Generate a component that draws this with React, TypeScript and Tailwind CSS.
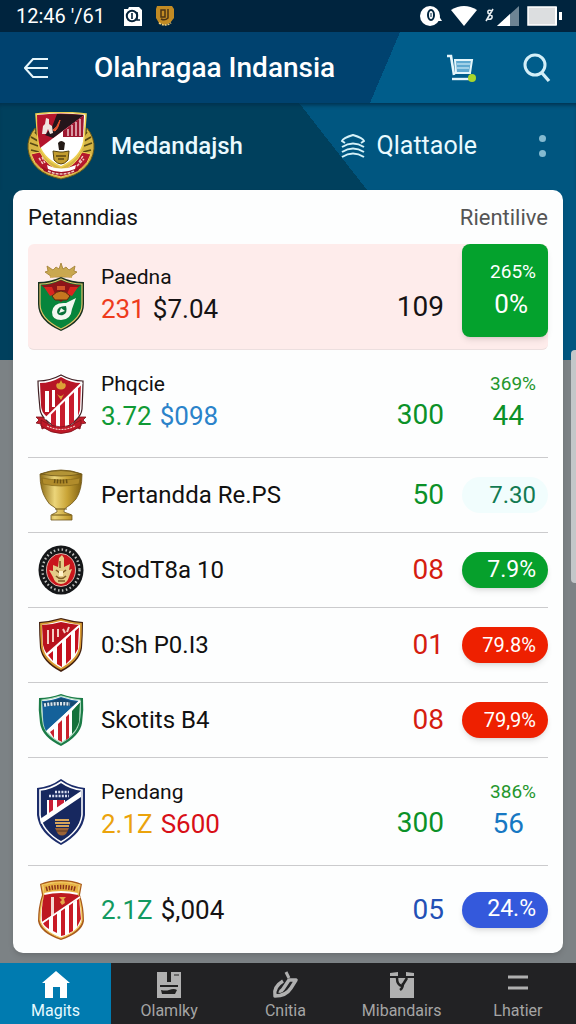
import type { ReactNode } from "react";

type Team = {
  id: string;
  crest: ReactNode;
  name?: string;
  first?: string;
  firstColor?: string;
  second?: string;
  secondColor?: string;
  score: string;
  scoreColor: string;
  top?: string;
  rate: string;
  rateClass: string;
  kind: "featured" | "tall" | "short" | "last";
};

function CrestGreen() {
  return (
    <svg viewBox="0 0 48 70" className="h-[70px] w-12" aria-hidden="true">
      <path d="M10 4l6 4 3-3 3 2 2-6 2 6 3-2 3 3 6-4-1 5 3 1-7 5H15L8 10l3-1z" fill="#c9a850" stroke="#a07d31" strokeWidth=".8" />
      <path d="M13 15q11-3 22 0" fill="none" stroke="#cda84f" strokeWidth="2" />
      <path d="M24 15q11 5 23 5v22q0 17-23 27Q1 59 1 42V20q12 0 23-5z" fill="#17311f" />
      <path d="M24 17q10 5 21 5v20q0 15-21 25Q3 57 3 42V22q11 0 21-5z" fill="#07853c" stroke="#e2c469" strokeWidth="1.2" />
      <path d="M24 18q10 5 20 5L24 40 4 23q10 0 20-5z" fill="#8e1519" />
      <path d="M7 25l8 0 3 7-5 2zM41 25l-8 0-3 7 5 2z" fill="#d9251f" />
      <path d="M15 34q9-10 18 0l-3 4H18z" fill="#c5761f" stroke="#5b2410" strokeWidth="1" />
      <path d="M20 24h8v4h-8z" fill="#d3542a" />
      <path d="M39 36L29 41q-13-1-14 9 0 8 9 8 10 0 11-11z" fill="#f3f7f1" />
      <path d="M29 44q-9 0-9 6 1 4 6 3 5-2 3-9z" fill="#08713a" />
      <path d="M24 46l4 3-6 2z" fill="#f3f7f1" />
    </svg>
  );
}

function CrestRibbon() {
  return (
    <svg viewBox="0 0 52 62" className="h-[62px] w-[52px]" aria-hidden="true">
      <path d="M1 44l10 0 3 9-7 3-1-5-5-1 3-3zM51 44l-10 0-3 9 7 3 1-5 5-1-3-3z" fill="#c21f2b" stroke="#7d1019" strokeWidth=".8" />
      <path d="M26 2q11 6 22 6 0 7-1 28-1 11-21 21Q6 47 5 36 3 15 3 8q12 0 23-6z" fill="#fff" stroke="#402024" strokeWidth="1.2" />
      <path d="M26 4q10 6 20 6L12 44q-6-5-6-12L5 10q11 0 21-6z" fill="#b71525" />
      <path d="M10 18h4v21h-4zM17 17h3v17h-3z" fill="#fff" />
      <path d="M16 40l5-6v20l-5-3zM25 30l5-6v32h-5zM34 21l5-6v34l-5 3zM43 12l3-2-1 27-2 6z" fill="#c81d2d" />
      <path d="M47 10L10 46" stroke="#fff" strokeWidth="2" />
      <path d="M22 15q-2-4 1-5 1 2 3-3 2 5 3 3 3 1 1 5-4 3-8 0zM22 21q4 4 7 0l-3 6z" fill="#dca136" />
      <path d="M6 47q20 14 40 0v6q-20 15-40 0z" fill="#bd1927" stroke="#7d1019" strokeWidth=".8" />
      <path d="M12 53q14 7 28 0" fill="none" stroke="#f1c6bf" strokeWidth="1.2" strokeDasharray="2 1" />
    </svg>
  );
}

function CrestCup() {
  return (
    <svg viewBox="0 0 44 52" className="h-[52px] w-11" aria-hidden="true">
      <defs>
        <linearGradient id="gold">
          <stop offset="0" stopColor="#8c6b14" />
          <stop offset=".35" stopColor="#ecd57a" />
          <stop offset=".65" stopColor="#c9a437" />
          <stop offset="1" stopColor="#806010" />
        </linearGradient>
      </defs>
      <path d="M1 5q21-8 42 0 0 16-6 25-5 6-9 8-4 2-3 5l8 3v5H12v-5l6-3q1-3-3-5-5-2-8-8Q1 21 1 5z" fill="url(#gold)" stroke="#70571a" strokeWidth=".8" />
      <path d="M2 5q20-7 40 0-20 4-40 0z" fill="#b39436" stroke="#6d5518" strokeWidth=".8" />
      <path d="M3 9q19 4 38 0l-1 6q-18 4-36 0z" fill="#b18c2b" stroke="#846719" strokeWidth=".7" />
      <path d="M15 12q7 1 15 0" stroke="#6c5213" strokeWidth="4" strokeDasharray="1.500 1.500" fill="none" />
      <path d="M16 40h12M13 46h19" stroke="#6c5213" strokeWidth="1" />
    </svg>
  );
}

function CrestRound() {
  return (
    <svg viewBox="0 0 46 50" className="h-[50px] w-[46px]" aria-hidden="true">
      <ellipse cx="23" cy="25" rx="22.5" ry="24.5" fill="#151719" />
      <ellipse cx="23" cy="25" rx="18.5" ry="20.5" fill="none" stroke="#bfc0bd" strokeWidth="2.4" strokeDasharray="1.5 2.5" />
      <ellipse cx="23" cy="25" rx="14.5" ry="16.5" fill="#c9161c" stroke="#e9d9cf" strokeWidth=".8" />
      <path d="M15 20l5 2 1-9 3-3 2 3 0 9 6-3-1 6 3-1-3 8q-2 7-8 7t-8-7l-4-7 4 1z" fill="#e4cd88" />
      <path d="M18 25q5 5 10 0M18 31q5 5 10 0M22 16v7M20 36h7" stroke="#7d5c25" strokeWidth="1.6" fill="none" />
      <path d="M21 26h4v5h-4z" fill="#fff3ca" />
    </svg>
  );
}

function CrestGoldRed() {
  return (
    <svg viewBox="0 0 46 56" className="h-14 w-[46px]" aria-hidden="true">
      <path d="M23 1q11 3 22 4 0 12-1 26-2 14-21 24Q4 45 2 31 1 17 1 5q12-1 22-4z" fill="#44210f" />
      <path d="M23 3q10 3 20 4 0 12-1 23-2 13-19 22Q6 43 4 30 3 18 3 7q10-1 20-4z" fill="#fff" stroke="#d89a31" strokeWidth="1.8" />
      <path d="M23 5q9 2 18 3L9 37q-3-4-4-9L4 8q9 0 19-3z" fill="#b8121d" />
      <path d="M10 38l5-4v10zM19 30l5-5v25l-5-3zM28 22l5-5v25l-5 5zM37 14l4-4-1 22-3 5z" fill="#c5101e" />
      <path d="M10 13v14M15 12v13M20 12v8M25 12l2 4M31 10l-2 5" stroke="#f4cfc4" strokeWidth="2" fill="none" />
      <path d="M41 9L8 38" stroke="#fff" strokeWidth="1.8" />
    </svg>
  );
}

function CrestBlueGreen() {
  return (
    <svg viewBox="0 0 46 54" className="h-[54px] w-[46px]" aria-hidden="true">
      <path d="M23 1q11 4 22 4 1 12-1 25-2 13-21 23Q4 44 2 30 0 17 1 5q11 0 22-4z" fill="#1b7c47" />
      <path d="M23 3q10 3 19 4 1 12-1 22-2 12-18 21Q6 41 5 29 3 17 4 7q9-1 19-4z" fill="#fff" stroke="#b3dec4" strokeWidth="1.2" />
      <path d="M23 4q9 3 18 4L8 38Q5 32 5 24L4 8q9 0 19-4z" fill="#14619a" />
      <path d="M5 9q9 0 18-4 8 3 17 4l-5 4H5z" fill="#164a73" />
      <path d="M6 12q14-2 26-1" stroke="#dbe5eb" strokeWidth="3.5" strokeDasharray="2 1.2" fill="none" />
      <path d="M12 39l4-3v9zM20 31l4-4v22l-4-2zM28 24l3-3v24l-3 2z" fill="#c8202c" />
      <path d="M34 18l8-9-1 20q-2 7-7 12z" fill="#14713b" />
      <path d="M42 8L9 39" stroke="#fff" strokeWidth="2" />
    </svg>
  );
}

function CrestNavy() {
  return (
    <svg viewBox="0 0 50 68" className="h-[68px] w-[50px]" aria-hidden="true">
      <path d="M25 1q11 8 24 9v27q-2 18-24 30Q3 55 1 37V10Q14 9 25 1z" fill="#1c2d6b" />
      <path d="M25 4q10 7 21 8v25q-2 16-21 27Q6 53 4 37V12q11-1 21-8z" fill="#17285f" stroke="#fff" strokeWidth="1.6" />
      <path d="M11 22h18v5L11 40z" fill="#fff" />
      <path d="M13 22h4v15l-4 3zM21 22h7v6l-7 5z" fill="#c91c35" />
      <path d="M45 13v6L5 46l-1-5z" fill="#fff" />
      <path d="M19 14h14M13 18h20" stroke="#d8def0" strokeWidth="2.6" strokeDasharray="2 1.2" fill="none" />
      <path d="M19 42h14M19 45h15M20 48h13" stroke="#d7a55b" strokeWidth="1.8" />
      <path d="M19 50h14l-3 6q-4 3-8 0z" fill="#9b6336" />
      <path d="M20 53h12" stroke="#57351e" strokeWidth="1" />
    </svg>
  );
}

function CrestBanner() {
  return (
    <svg viewBox="0 0 48 62" className="h-[62px] w-12" aria-hidden="true">
      <path d="M24 1q12 0 21 4l-2 11q4 12 4 26-2 12-23 19Q3 54 1 42 1 28 5 16L3 5Q12 1 24 1z" fill="#a95b1c" />
      <path d="M24 3q10 0 19 3l-2 10q4 12 4 25-2 11-21 18Q5 52 3 41 3 28 7 16L5 6q9-3 19-3z" fill="#fff" stroke="#f1c75d" strokeWidth="1.3" />
      <path d="M7 16q17-4 34 0l2 3L5 43q-1-14 2-27z" fill="#bd1820" />
      <path d="M14 18h3v18l-3 3z" fill="#f4d7d0" />
      <path d="M6 44l6-5v11q-5-3-6-6zM16 36l4-3v21l-4-2zM24 31l4-3v28l-4 1zM32 26l4-4v30l-4 2zM40 20l2-1 2 21-4 8z" fill="#c91b26" />
      <path d="M43 18L5 44" stroke="#fff" strokeWidth="1.6" />
      <path d="M6 6q18-5 36 0l-1 8q-17-4-34 0z" fill="#e7b243" />
      <path d="M9 10q15-4 30 0" stroke="#8d3419" strokeWidth="4.5" strokeDasharray="1.5 1.3" fill="none" />
      <path d="M22 18h7l-2 2 1 4-3 2-2-3 2-2z" fill="#e4a547" />
    </svg>
  );
}

function ClubLogo() {
  return (
    <svg viewBox="0 0 68 68" className="size-[68px]" aria-hidden="true">
      <path d="M8 16Q0 26 1 37q3 24 33 30 30-6 33-30 1-11-7-21l-4 14H12z" fill="#d5b544" stroke="#695819" strokeWidth="1" />
      <path d="M4 25l7 4M3 31l8 3M4 38l8 2M64 25l-7 4M65 31l-8 3M64 38l-8 2M8 20l4 4M60 20l-4 4" stroke="#564914" strokeWidth="1.8" />
      <path d="M4 42l9-2q7 15 21 18 14-3 21-18l9 2q-5 18-30 23Q9 60 4 42z" fill="#b5182b" stroke="#f0d35d" strokeWidth="1" />
      <path d="M14 54q20 12 40 0l-3 5q-17 8-34 0z" fill="#9d1023" />
      <path d="M12 46l4 6M15 45l3 6M52 50l4-6M50 54l7-7M21 59q13 6 26 0" stroke="#f1c9bf" strokeWidth="1.5" strokeDasharray="3 1" fill="none" />
      <path d="M9 2q25-3 50 0l-2 27q-3 17-23 26Q14 46 11 29z" fill="#fff" stroke="#edcf50" strokeWidth="1.6" />
      <path d="M10 3q24-3 47 0L13 36q-3-12-3-33z" fill="#b5152c" />
      <path d="M30 2q14 0 27 1L26 26l-8-3 7-8z" fill="#24151b" />
      <path d="M57 3L36 19v6h20z" fill="#9d1730" />
      <path d="M41 17v7M45 13v11M49 10v14M53 7v17" stroke="#ebc5c9" strokeWidth="1.5" />
      <path d="M15 22l1-8 2-2 1-6 3 1 0 5 3 2 1 7-3 1-2-5-2 5z" fill="#efe5df" />
      <path d="M26 18q4-2 7-10-2 9-5 11z" fill="#ef5730" stroke="#ef5730" />
      <path d="M31 31q3-4 7 0l-1 7h-5z" fill="#241b16" />
      <path d="M26 39l7 1h3l6-1-1 9q-7 8-14 0z" fill="#c29c2e" stroke="#55430f" strokeWidth="1" />
      <path d="M29 44h10M31 47h6" stroke="#5b4612" strokeWidth="1.4" />
      <path d="M20 53q14 7 29 0l-1 4q-14 6-27 0z" fill="#fff" />
    </svg>
  );
}

const pill = "h-9 rounded-full pr-3 shadow-md flex items-center justify-end text-white";

const teams: Team[] = [
  { id: "1", crest: <CrestGreen />, name: "Paedna", first: "231", firstColor: "text-[#ee3b1c]", second: "$7.04", secondColor: "text-[#161314]", score: "109", scoreColor: "text-[#161314]", top: "265%", rate: "0%", rateClass: "text-white", kind: "featured" },
  { id: "2", crest: <CrestRibbon />, name: "Phqcie", first: "3.72", firstColor: "text-[#109a35]", second: "$098", secondColor: "text-[#2b83ca]", score: "300", scoreColor: "text-[#0b9128]", top: "369%", rate: "44", rateClass: "text-[#0b9128]", kind: "tall" },
  { id: "3", crest: <CrestCup />, name: "Pertandda Re.PS", score: "50", scoreColor: "text-[#0b9128]", rate: "7.30", rateClass: "flex h-9 items-center justify-end rounded-full bg-[#f1fdfd] pr-3 text-2xl text-[#137a52]", kind: "short" },
  { id: "4", crest: <CrestRound />, name: "StodT8a 10", score: "08", scoreColor: "text-[#d51d10]", rate: "7.9%", rateClass: `${pill} bg-[#06a02c] text-[23px]`, kind: "short" },
  { id: "5", crest: <CrestGoldRed />, name: "0:Sh P0.I3", score: "01", scoreColor: "text-[#d51d10]", rate: "79.8%", rateClass: `${pill} bg-[#ee2000] text-xl`, kind: "short" },
  { id: "6", crest: <CrestBlueGreen />, name: "Skotits B4", score: "08", scoreColor: "text-[#d51d10]", rate: "79,9%", rateClass: `${pill} bg-[#ee2000] text-xl`, kind: "short" },
  { id: "7", crest: <CrestNavy />, name: "Pendang", first: "2.1Z", firstColor: "text-[#eba30c]", second: "S600", secondColor: "text-[#d80f17]", score: "300", scoreColor: "text-[#0b9128]", top: "386%", rate: "56", rateClass: "text-[#1778c3]", kind: "tall" },
  { id: "8", crest: <CrestBanner />, first: "2.1Z", firstColor: "text-[#129960]", second: "$,004", secondColor: "text-[#161314]", score: "05", scoreColor: "text-[#2350b5]", rate: "24.%", rateClass: `${pill} bg-[#3459dc] text-[23px]`, kind: "last" },
];

const rowClass = {
  featured: "h-[106px] bg-[#feeceb]",
  tall: "h-[108px]",
  short: "h-[75px]",
  last: "h-[87px]",
};

const edgeClass = {
  featured: "border-b border-[#ecdfdf] first:rounded-l-md last:rounded-r-md",
  tall: "border-b border-[#cbcbcd]",
  short: "border-b border-[#cbcbcd]",
  last: "",
};

function TeamRow({ team }: { team: Team }) {
  const double = team.kind === "featured" || team.kind === "tall";
  const edge = edgeClass[team.kind];

  return (
    <tr className={rowClass[team.kind]}>
      <td className={`${edge} p-0`}>
        <div className="flex w-[66px] justify-center">{team.crest}</div>
      </td>
      <td className={`${edge} p-0 text-[#111] ${double ? "pb-2" : ""}`}>
        {team.name && (
          <div className={double ? "text-[21px] leading-8" : "text-2xl leading-8"}>{team.name}</div>
        )}
        {team.first && (
          <div className="flex gap-2 text-[26px] leading-8">
            <span className={team.firstColor}>{team.first}</span>
            <span className={team.secondColor}>{team.second}</span>
          </div>
        )}
      </td>
      <td className={`${edge} p-0 text-right text-[28px] leading-8 ${team.scoreColor} ${double ? "pb-[26px] align-bottom" : ""}`}>
        {team.score}
      </td>
      <td className={`${edge} p-0 pl-[18px] ${team.kind === "featured" ? "align-top" : ""} ${team.kind === "tall" ? "pb-2" : ""}`}>
        {team.kind === "featured" && (
          <div className="flex h-[93px] flex-col rounded-lg bg-[#04a22d] pt-3 pr-3 text-right text-white shadow-md">
            <span className="text-[19px] leading-8">{team.top}</span>
            <span className="pr-2 text-[26px] leading-8">{team.rate}</span>
          </div>
        )}
        {team.kind === "tall" && (
          <div className="flex flex-col pr-3 text-right">
            <span className="text-[19px] leading-8 text-[#24962c]">{team.top}</span>
            <span className={`pr-3 text-[28px] leading-8 ${team.rateClass}`}>{team.rate}</span>
          </div>
        )}
        {!double && <div className={team.rateClass}>{team.rate}</div>}
      </td>
    </tr>
  );
}

function StatusBar() {
  return (
    <div className="flex h-8 items-center bg-[#00243e] pr-[13px] pl-4 text-xl text-white">
      <span>12:46 '/61</span>
      <svg viewBox="0 0 20 20" className="ml-[18px] size-5" aria-hidden="true">
        <path d="M1 3l4 0 1-2h10l3 3v16H1z" fill="#fff" />
        <circle cx="9" cy="10" r="5.2" fill="none" stroke="#06233a" strokeWidth="2" />
        <path d="M9 7v6M14 6v8h3" stroke="#06233a" strokeWidth="1.6" fill="none" />
      </svg>
      <svg viewBox="0 0 20 22" className="ml-3 h-[22px] w-5" aria-hidden="true">
        <path d="M2 1h15l2 3v9l-4 5-5 2-6-2-3-5V4z" fill="#c28b24" />
        <path d="M6 5h4v7H6zM13 4v9q-3 3-7 1" stroke="#4b3415" strokeWidth="1.5" fill="none" />
        <path d="M4 18q6 4 12 0" stroke="#f4d17a" strokeWidth="1.6" strokeDasharray="2 1" fill="none" />
      </svg>
      <div className="ml-auto flex items-center gap-2">
        <svg viewBox="0 0 24 22" className="h-[22px] w-6" aria-hidden="true">
          <circle cx="11" cy="11" r="10" fill="#fff" />
          <path d="M18 8l5 8-5 0z" fill="#fff" />
          <ellipse cx="12" cy="10" rx="3" ry="5" fill="none" stroke="#00243e" strokeWidth="2" />
          <path d="M12 8v4" stroke="#00243e" />
        </svg>
        <svg viewBox="0 0 26 20" className="h-5 w-[26px]" aria-hidden="true">
          <path d="M0 4q13-8 26 0L13 20z" fill="#fff" />
        </svg>
        <svg viewBox="0 0 34 20" className="h-5 w-[34px]" aria-hidden="true">
          <path d="M7 5q-5-2-4 2l4 3q1 4-5 3M8 3L1 15" stroke="#e9eff2" strokeWidth="1.6" fill="none" />
          <path d="M34 0v20H12z" fill="#6d8494" />
          <path d="M25 8v12H12z" fill="#fff" />
        </svg>
        <svg viewBox="0 0 36 20" className="h-5 w-9" aria-hidden="true">
          <path d="M1 1h28v18H1z" fill="#dcdee0" stroke="#fff" strokeWidth="1.5" />
          <path d="M28 1h2v18h-2zM32 6h3v8h-3z" fill="#fff" />
        </svg>
      </div>
    </div>
  );
}

function Header() {
  return (
    <header className="flex h-[71px] items-center bg-[linear-gradient(113deg,#00426f_66%,#005d8b_66%)] px-6 text-white">
      <button type="button" aria-label="Back">
        <svg viewBox="0 0 25 22" className="h-[22px] w-[25px]" fill="none" stroke="#e6f6fb" strokeWidth="2" aria-hidden="true">
          <path d="M24 2H9L1 11l8 9h15M2 11h22" />
        </svg>
      </button>
      <h1 className="ml-[45px] text-[28px] font-medium">Olahragaa Indansia</h1>
      <button type="button" aria-label="Cart" className="ml-auto">
        <svg viewBox="0 0 30 28" className="h-7 w-[30px]" fill="none" aria-hidden="true">
          <path d="M1 2h4l3 19" stroke="#e3f6fb" strokeWidth="2.6" />
          <path d="M9 6h17l-2 13H10z" fill="#5fa9d0" stroke="#e3f6fb" strokeWidth="2" />
          <path d="M11 10h13M11 14h12" stroke="#b7ddee" strokeWidth="1.5" />
          <path d="M6 25h20" stroke="#e3f6fb" strokeWidth="2.4" />
          <circle cx="26" cy="24" r="4" fill="#a8d62c" />
        </svg>
      </button>
      <button type="button" aria-label="Search" className="ml-[46px]">
        <svg viewBox="0 0 30 30" className="size-[30px]" fill="none" stroke="#d3eff8" aria-hidden="true">
          <circle cx="13" cy="12" r="10" strokeWidth="3" />
          <path d="M20 20l7 8" strokeWidth="3.4" />
        </svg>
      </button>
    </header>
  );
}

function ClubBar() {
  return (
    <section className="flex h-[87px] items-center bg-[linear-gradient(52deg,#00405d_57%,#005680_57%)] pr-[30px] pb-[2px] pl-[27px] text-[#eafaff] shadow-[inset_0_4px_4px_-2px_#00304d]">
      <ClubLogo />
      <h2 className="ml-4 text-2xl font-medium">Medandajsh</h2>
      <button type="button" className="ml-auto flex items-center gap-3 text-[25px]">
        <svg viewBox="0 0 24 26" className="h-[26px] w-6" fill="none" stroke="#d5f1f8" strokeWidth="2" aria-hidden="true">
          <path d="M4 10L1 8q1-3 11-6 10 3 11 6l-3 2M1 14q11-7 22 0M1 19q11-7 22 0M1 24q11-7 22 0" />
        </svg>
        Qlattaole
      </button>
      <button type="button" aria-label="More" className="ml-[62px] flex flex-col gap-2">
        <span className="size-[7px] rounded-full bg-[#84bad0]" />
        <span className="size-[7px] rounded-full bg-[#84bad0]" />
      </button>
    </section>
  );
}

const tabs = [
  {
    label: "Magits",
    icon: <path d="M14 0l14 12h-3v15h-7V16h-7v11H3V12H0z" fill="#fff" />,
  },
  {
    label: "Olamlky",
    icon: (
      <>
        <path d="M2 1h24v26H2z" fill="#b0b0b0" />
        <path d="M12 1h4v10h-4zM5 14h18v2H5zM6 19q5 1 8 0 5-2 8 0l-2 4H7z" fill="#222" />
        <path d="M19 4h5" stroke="#222" />
      </>
    ),
  },
  {
    label: "Cnitia",
    icon: (
      <g fill="none" stroke="#b0b0b0" strokeLinejoin="round">
        <path d="M12 10Q2 16 4 25q11 0 16-8l5-8-7 0-6 9q-2 3-4 2" strokeWidth="3.5" />
        <path d="M15 1l3 6" strokeWidth="3" />
      </g>
    ),
  },
  {
    label: "Mibandairs",
    icon: (
      <>
        <path d="M2 7h24v20H2zM2 2l8-1v4H2zM18 1l8 1v3h-8z" fill="#b0b0b0" />
        <path d="M9 7q0 7 5 8l5-8M15 12q0 5-3 7" fill="none" stroke="#222" strokeWidth="2.5" />
      </>
    ),
  },
  {
    label: "Lhatier",
    icon: <path d="M4 6h20M4 17h20" fill="none" stroke="#b0b0b0" strokeWidth="3" />,
  },
];

export default function App() {
  return (
    <div className="relative flex min-h-screen flex-col bg-[#7c8285] font-[Roboto,sans-serif]">
      <StatusBar />
      <Header />
      <ClubBar />

      <main className="flex-1 bg-[linear-gradient(90deg,#00405d_50%,#005680_50%)] bg-[length:100%_170px] bg-no-repeat px-[13px] pb-[10px]">
        <div className="rounded-[10px] bg-[#fdfefe] px-[15px] shadow-md">
          <table className="w-full table-fixed border-separate border-spacing-0">
            <colgroup>
              <col className="w-[73px]" />
              <col />
              <col className="w-20" />
              <col className="w-[104px]" />
            </colgroup>
            <thead>
              <tr className="h-[54px] text-[22px]">
                <th scope="col" colSpan={2} className="p-0 text-left font-normal text-[#151515]">Petanndias</th>
                <th scope="col" colSpan={2} className="p-0 text-right font-normal text-[#555]">Rientilive</th>
              </tr>
            </thead>
            <tbody>
              {teams.map((team) => (
                <TeamRow key={team.id} team={team} />
              ))}
            </tbody>
          </table>
        </div>
      </main>

      <nav className="flex h-[61px] bg-[#222224]">
        {tabs.map((tab, i) => (
          <a
            key={tab.label}
            href="#"
            className={`flex flex-col items-center pt-2 text-base leading-6 ${i === 0 ? "w-[111px] bg-[#007bb0] text-[#e6faff]" : "flex-1 text-[#a5a5a5]"}`}
          >
            <svg viewBox="0 0 28 28" className="size-7" aria-hidden="true">{tab.icon}</svg>
            {tab.label}
          </a>
        ))}
      </nav>

      <div className="absolute top-[350px] right-0 h-[233px] w-[5px] rounded-l bg-[#c3c7c9]" />
    </div>
  );
}
